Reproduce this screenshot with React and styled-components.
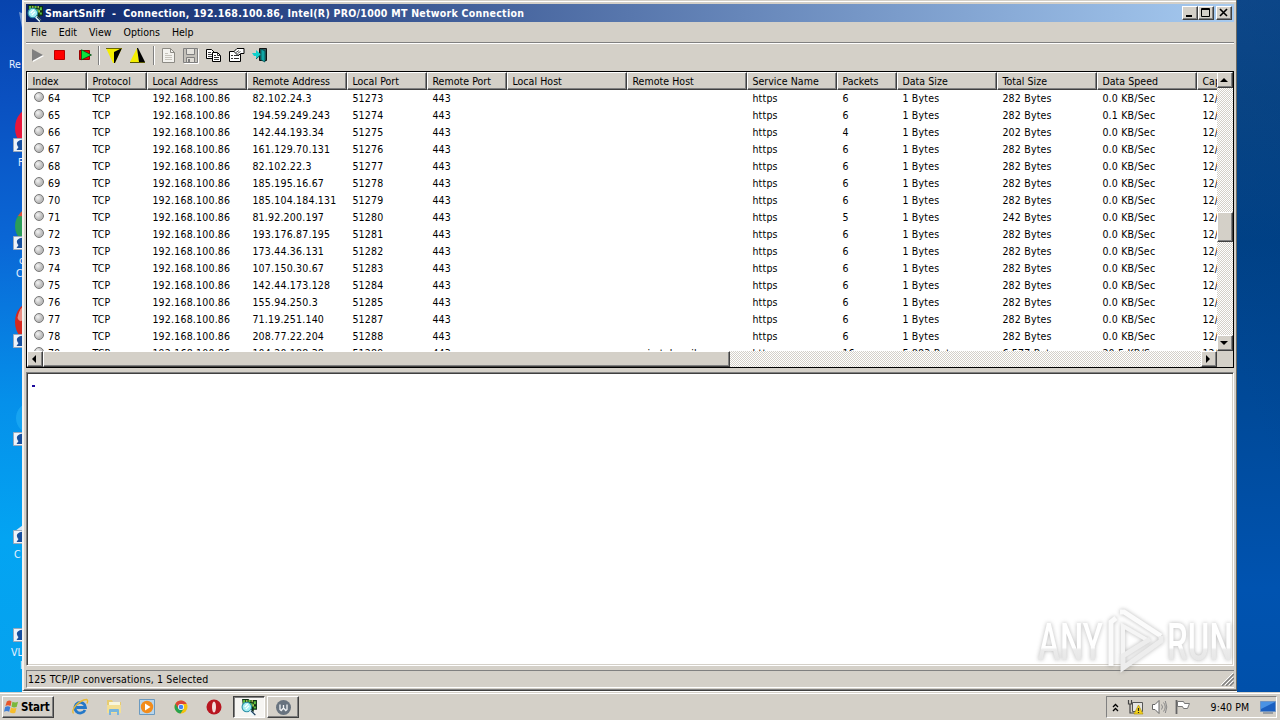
import React from 'react';
import styled, { createGlobalStyle, css } from 'styled-components';

const GlobalStyle = createGlobalStyle`
  * {
    box-sizing: border-box;
  }
  body {
    margin: 0;
    overflow: hidden;
    font-family: "DejaVu Sans Condensed", "DejaVu Sans", sans-serif;
    font-size: 10.5px;
    letter-spacing: 0.2px;
    line-height: 14px;
    color: #000;
  }
  svg {
    display: block;
    flex: none;
  }
`;

const raised = css`
  border: 1px solid;
  border-color: #fff #404040 #404040 #fff;
  box-shadow: inset -1px -1px 0 #808080;
  background-color: #d4d0c8;
`;

const Screen = styled.div`
  width: 1280px;
  height: 720px;
  display: flex;
  flex-direction: column;
  overflow: hidden;
  position: relative;
`;

const Workspace = styled.div`
  height: 692px;
  display: flex;
`;

const IconStrip = styled.div`
  width: 22px;
  display: grid;
  grid-template-rows: repeat(7, 98px);
  overflow: hidden;
  background: linear-gradient(#0744ae 0%, #0a50c0 14%, #0a67d6 35%, #0590ea 58%, #03a4f2 78%, #06a2ee 100%);
`;

const Shortcut = styled.div`
  padding-top: 10px;
  overflow: hidden;
`;

const ShortcutLabel = styled.div`
  margin-top: 4px;
  padding-left: ${props => props.$indent}px;
  color: #e6f1ff;
  line-height: 13px;
  white-space: pre;
  letter-spacing: 0;
`;

const RightStrip = styled.div`
  flex: 1;
  background: linear-gradient(250deg, rgba(0, 60, 130, 0.25), transparent 60%),
    linear-gradient(#10498a 0%, #0a4584 14%, #004186 35%, #004a9a 60%, #0053b0 85%, #0050aa 100%);
`;

const Window = styled.div`
  width: 1215px;
  height: 691px;
  display: flex;
  flex-direction: column;
  background-color: #d4d0c8;
  border-left: 2px solid #f4f2ee;
  border-right: 1px solid #6c6a62;
  border-bottom: 1px solid #404040;
  padding: 4px 2px 0;
  box-shadow: inset 0 1px 0 #d4d0c8, inset 0 2px 0 #fff, inset 0 -1px 0 #808080;
`;

const TitleBar = styled.div`
  height: 18px;
  display: flex;
  align-items: center;
  padding: 0 2px 0 1px;
  background: linear-gradient(90deg, #0a246a, #a6caf0);
`;

const Title = styled.div`
  flex: 1;
  padding-left: 1px;
  color: #fff;
  font-weight: bold;
  font-size: 10.5px;
  letter-spacing: 0.27px;
  white-space: pre;
`;

const CaptionButton = styled.div`
  ${raised}
  width: 16px;
  height: 14px;
  margin-left: ${props => (props.$gap ? 2 : 0)}px;
`;

const MenuBar = styled.div`
  height: 21px;
  display: flex;
  align-items: center;
  gap: 12px;
  padding: 0 0 1px 5px;
  letter-spacing: 0;
  border-bottom: 1px solid #808080;
`;

const ToolBar = styled.div`
  height: 28px;
  display: flex;
  align-items: center;
  border-top: 1px solid #fff;
  padding: 0 0 5px 3px;
`;

const Tool = styled.div`
  width: ${props => props.$w || 23}px;
  display: flex;
  justify-content: center;
`;

const Divider = styled.div`
  width: 2px;
  height: 19px;
  margin: 1px ${props => props.$right || 0}px 0 ${props => props.$left || 0}px;
  border-left: 1px solid #808080;
  border-right: 1px solid #fff;
`;

const ListFrame = styled.div`
  height: 297px;
  width: 1208px;
  display: grid;
  grid-template-columns: 1190px 16px;
  grid-template-rows: 279px 16px;
  border: 1px solid #000;
  background-color: #d4d0c8;
`;

const ListView = styled.div`
  background-color: #fff;
  overflow: hidden;
`;

const columns = '60px 60px 100px 100px 80px 80px 120px 120px 90px 60px 100px 100px 100px 100px';

const HeaderRow = styled.div`
  display: grid;
  width: 1270px;
  grid-template-columns: ${columns};
  height: 17px;
  letter-spacing: 0.05px;
`;

const HeaderCell = styled.div`
  background-color: #d4d0c8;
  border-top: 1px solid #fff;
  border-left: 1px solid #fff;
  border-right: 1px solid #404040;
  border-bottom: 1px solid #404040;
  box-shadow: inset -1px -1px 0 #808080;
  padding-left: 4.4px;
  line-height: 16px;
  white-space: nowrap;
`;

const Row = styled.div`
  display: grid;
  width: 1270px;
  grid-template-columns: ${columns};
  height: 17px;
`;

const Cell = styled.div`
  display: flex;
  align-items: center;
  padding-left: 5.4px;
  padding-top: 1px;
  white-space: nowrap;
`;

const Dot = styled.span`
  width: 10px;
  height: 10px;
  margin: -2px 4px 0 1.6px;
  border-radius: 50%;
  border: 1px solid #777;
  background: radial-gradient(circle at 35% 35%, #f2f2f2, #c0c0c0 55%, #b2b2b2);
`;

const track = css`
  display: flex;
  background: repeating-conic-gradient(#fff 0 25%, #d4d0c8 0 50%) 0 0 / 2px 2px;
`;

const VScroll = styled.div`
  ${track}
  flex-direction: column;
`;

const HScroll = styled.div`
  ${track}
`;

const ScrollButton = styled.div`
  ${raised}
  width: 16px;
  height: 16px;
  flex: none;
  display: flex;
  align-items: center;
  justify-content: center;
  padding-right: 2px;
`;

const Thumb = styled.div`
  ${raised}
  width: ${props => props.$w}px;
  height: ${props => props.$h}px;
  margin-top: ${props => props.$offset || 0}px;
`;

const Spacer = styled.div`
  flex: 1;
`;

const DataPane = styled.div`
  height: 294px;
  width: 1208px;
  margin-top: 4px;
  padding: 12px 0 0 5px;
  background-color: #fff;
  border: 1px solid;
  border-color: #808080 #fff #fff #808080;
  box-shadow: inset 1px 1px 0 #404040, inset -1px -1px 0 #d4d0c8;
`;

const Marker = styled.div`
  width: 3px;
  height: 2px;
  background-color: #1c0a9c;
`;

const StatusBar = styled.div`
  height: 18px;
  width: 1208px;
  margin-top: 4px;
  display: flex;
  align-items: center;
  justify-content: space-between;
  padding-left: 1px;
  letter-spacing: 0.15px;
  border-top: 1px solid #808080;
  border-left: 1px solid #808080;
  border-bottom: 1px solid #fff;
`;

const Taskbar = styled.div`
  height: 28px;
  display: flex;
  align-items: center;
  padding: 2px 3px 1px 2px;
  background-color: #d4d0c8;
  border-top: 1px solid #d4d0c8;
  box-shadow: inset 0 1px 0 #fff;
`;

const StartButton = styled.div`
  ${raised}
  width: 52px;
  height: 22px;
  display: flex;
  align-items: center;
  gap: 2px;
  padding-left: 1px;
  font-weight: bold;
  font-size: 11.5px;
  letter-spacing: -0.2px;
`;

const QuickLaunch = styled.div`
  display: flex;
  align-items: center;
  width: 179px;
  padding-left: 17px;
  gap: 15.5px;
`;

const TaskButton = styled.div`
  ${raised}
  width: 32px;
  height: 22px;
  margin-right: 2px;
  display: flex;
  align-items: center;
  justify-content: center;
  ${props =>
    props.$active &&
    css`
      border-color: #404040 #fff #fff #404040;
      box-shadow: inset 1px 1px 0 #808080;
      background-color: #f6f5f2;
    `}
`;

const Tray = styled.div`
  width: 171px;
  height: 22px;
  display: flex;
  align-items: center;
  padding-left: 5px;
  border: 1px solid;
  border-color: #808080 #fff #fff #808080;
`;

const Clock = styled.div`
  width: 42px;
  margin: 0 10px 0 11px;
  white-space: nowrap;
  letter-spacing: 0.1px;
`;

const Watermark = styled.svg`
  position: absolute;
  left: 1030px;
  top: 604px;
  filter: drop-shadow(0 0 2px rgba(80, 80, 80, 0.4));
`;

const headers = [
  'Index', 'Protocol', 'Local Address', 'Remote Address', 'Local Port', 'Remote Port', 'Local Host',
  'Remote Host', 'Service Name', 'Packets', 'Data Size', 'Total Size', 'Data Speed', 'Cap',
];

// index, remote address, local port, packets, total, speed
const connections = [
  [64, '82.102.24.3', 51273, 6, '282', '0.0'],
  [65, '194.59.249.243', 51274, 6, '282', '0.1'],
  [66, '142.44.193.34', 51275, 4, '202', '0.0'],
  [67, '161.129.70.131', 51276, 6, '282', '0.0'],
  [68, '82.102.22.3', 51277, 6, '282', '0.0'],
  [69, '185.195.16.67', 51278, 6, '282', '0.0'],
  [70, '185.104.184.131', 51279, 6, '282', '0.0'],
  [71, '81.92.200.197', 51280, 5, '242', '0.0'],
  [72, '193.176.87.195', 51281, 6, '282', '0.0'],
  [73, '173.44.36.131', 51282, 6, '282', '0.0'],
  [74, '107.150.30.67', 51283, 6, '282', '0.0'],
  [75, '142.44.173.128', 51284, 6, '282', '0.0'],
  [76, '155.94.250.3', 51285, 6, '282', '0.0'],
  [77, '71.19.251.140', 51287, 6, '282', '0.0'],
  [78, '208.77.22.204', 51288, 6, '282', '0.0'],
  [79, '104.20.188.38', 51289, 16, '6,577', '20.5', '5,883', 'myip.tabmail'],
];

const AppIcon = () => (
  <svg width="17" height="17" viewBox="0 0 16 16">
    <path d="M1 0h6l1 1h7v9h-3v2h-3V9H2z" fill="#0c2e14" />
    <path d="M2 1h2v3H2zM7 1h2v2H7zM12 2h2v3h-2zM9 4h2v3H9zM12 7h2v2h-2z" fill="#5fc23e" />
    <path d="M10 1h1v2h-1zM5 1h1v2H5zM11 5h1v2h-1z" fill="#e8f06a" />
    <circle cx="5.500" cy="7.500" r="4.500" fill="#a5eef2" stroke="#2a8fa6" />
    <path d="M3.500 7.500l3-3M4.500 9.500l3-3" stroke="#fff" strokeWidth="1.200" />
    <path d="M8.500 11l4 4" stroke="#e6fbff" strokeWidth="2.600" />
    <path d="M9.500 11l4 4.200" stroke="#1d3d5a" strokeWidth="1.200" />
  </svg>
);

const ShortcutIcon = ({ kind }) => (
  <svg width="22" height="44" viewBox="0 0 22 44">
    {kind === 'ball' && <ellipse cx="32" cy="20" rx="17" ry="20" fill="#e8163a" />}
    {kind === 'chrome' && (
      <g>
        <circle cx="34" cy="20" r="19" fill="#2b9d57" />
        <path d="M18 10a19 19 0 0 1 20-9v10z" fill="#dd4b39" />
      </g>
    )}
    {kind === 'opera' && (
      <g>
        <ellipse cx="32" cy="18" rx="17" ry="20" fill="#d4281e" />
        <path d="M17.500 14q1.500-8 5-11v13q-3 3-5-2z" fill="#eda79c" opacity=".8" />
      </g>
    )}
    {kind === 'paper' && <path d="M15 31l8-6v20H15z" fill="#d7e6f2" />}
    {kind === 'glow' && <circle cx="32" cy="16" r="16" fill="#27b5f8" opacity="0.5" />}
    {kind === 'bin' && <path d="M19 2l6 2v18l-3-4z" fill="#b9cbe6" opacity="0.6" />}
    {kind !== 'bin' && (
      <g>
        <path d="M13.500 30.500h16v13h-16z" fill="#edf3fa" stroke="#9aa9bb" />
        <path d="M23 31.500q-7 1-6 5 .5 2 1.500 2.500l-2 3h7z" fill="#164f9e" />
      </g>
    )}
  </svg>
);

// only the first letters stick out from under the window
const shortcuts = [
  { kind: 'bin', label: 'Re', indent: 9 },
  { kind: 'ball', label: 'F', indent: 18 },
  { kind: 'chrome', label: ' c\nC', indent: 16 },
  { kind: 'opera', label: '', indent: 19 },
  { kind: 'glow', label: '', indent: 19 },
  { kind: 'paper', label: 'C', indent: 14 },
  { kind: 'vlc', label: 'VL\n   l', indent: 11 },
];

const PlayIcon = () => (
  <svg width="14" height="14" viewBox="0 0 14 14">
    <path d="M2 2l11 6-11 6z" fill="#fff" />
    <path d="M1 1l11 6-11 6z" fill="#808080" />
  </svg>
);

const StopIcon = () => (
  <svg width="12" height="12" viewBox="0 0 12 12">
    <path d="M.5 1.500h10v9H.5z" fill="#f00" stroke="#b80000" />
  </svg>
);

const RestartIcon = () => (
  <svg width="14" height="12" viewBox="0 0 14 12">
    <path d="M.5 1.500h10v9H.5z" fill="#e00" stroke="#900" />
    <path d="M2.500 .8l10 5.200-10 4.800z" fill="#0be33c" stroke="#064a14" strokeWidth=".8" />
  </svg>
);

const FilterIcon = ({ up }) => (
  <svg width="17" height="17" viewBox="0 0 17 17">
    {up ? (
      <g>
        <path d="M8 1L1 15h9z" fill="#f4ee00" />
        <path d="M8 1l2 14h6L9 1z" fill="#000" />
        <path d="M1 15.500h15" stroke="#5a5800" />
      </g>
    ) : (
      <g>
        <path d="M0 1h16L9 16H7z" fill="#f4ee00" />
        <path d="M16 1L9 16H8V5z" fill="#000" />
        <path d="M0 1.500h16" stroke="#6a6700" />
      </g>
    )}
  </svg>
);

const NewIcon = () => (
  <svg width="15" height="17" viewBox="0 0 15 17">
    <path d="M1.500 1.500h8l4 4v10h-12z" fill="#f3f2ee" stroke="#8c8a84" />
    <path d="M9.500 1.500v4h4" fill="none" stroke="#8c8a84" />
    <path d="M4 6.500h3M4 8.500h7M4 10.500h7M4 12.500h7" stroke="#c6c3bb" />
  </svg>
);

const SaveIcon = () => (
  <svg width="17" height="17" viewBox="0 0 17 17">
    <path d="M2.500 2.500h14v14h-14z" fill="none" stroke="#fff" />
    <path d="M1.500 1.500h14v14h-14z" fill="#c4c1ba" stroke="#808080" />
    <path d="M4.500 1.500h8v6h-8z" fill="#e6e4de" stroke="#808080" />
    <path d="M4.500 10.500h8v5h-8z" fill="#e0ddd6" stroke="#808080" />
    <path d="M6 12h2v3H6z" fill="#808080" />
  </svg>
);

const CopyIcon = () => (
  <svg width="16" height="15" viewBox="0 0 16 15">
    <path d="M.5 1.500h5l3 3v6h-8z" fill="#fff" stroke="#000" />
    <path d="M2 4.500h3M2 6.500h4M2 8.500h4" stroke="#444" />
    <path d="M6.500 4.500h5l3 3v6h-8z" fill="#fff" stroke="#000" />
    <path d="M11.500 4.500v3h3M8 7.500h2M8 9.500h5M8 11.500h5" fill="none" stroke="#333" />
  </svg>
);

const PropertiesIcon = () => (
  <svg width="16" height="16" viewBox="0 0 16 16">
    <path d="M.5 4.500h11v10H.5z" fill="#fff" stroke="#000" />
    <path d="M2 8.500h2M5 8.500h5M2 11.500h2M5 11.500h5" stroke="#333" />
    <path d="M5 4.500L8 1.500h7v5h-3L9 8.500 7.500 7z" fill="#fff" stroke="#000" />
    <path d="M7 5.500l3-2M8.500 6.500l3-2" stroke="#555" />
  </svg>
);

const ExitIcon = () => (
  <svg width="16" height="16" viewBox="0 0 16 16">
    <path d="M7.500 1.500h7v12h-7z" fill="#2d5a5e" stroke="#111" />
    <path d="M9 2l4 2v11l-4-2z" fill="#12a5a5" stroke="#044" strokeWidth=".7" />
    <path d="M0 6h4V3l5 4.500L4 12V9H2z" fill="#12d0cc" />
    <path d="M4 12l5-4.500" stroke="#066" />
  </svg>
);

const Arrow = ({ dir }) => {
  const paths = {
    up: 'M4 2l4 4H0z',
    down: 'M0 2h8L4 6z',
    left: 'M6 0v8L2 4z',
    right: 'M2 0v8l4-4z',
  };
  return (
    <svg width="8" height="8" viewBox="0 0 8 8">
      <path d={paths[dir]} />
    </svg>
  );
};

const WindowsFlag = () => (
  <svg width="15" height="16" viewBox="0 0 16 16">
    <path d="M3 2q3-2 5 0L7 7Q4 5.500 1.500 7z" fill="#e8562a" />
    <path d="M9 2.500q3 1.500 6 0L13.500 8Q10 9 8 7.500z" fill="#7ab83c" />
    <path d="M1.200 8q3-1.500 5.500 0L5.500 13Q3 11.500 0 13z" fill="#3f7fd6" />
    <path d="M7.500 8.500q3 1.500 5.800.5L12 14q-3 1.500-5.800-.5z" fill="#f6bd2c" />
  </svg>
);

const IeIcon = () => (
  <svg width="18" height="18" viewBox="0 0 18 18">
    <path d="M14 12A5.300 5.300 0 1 1 14.500 9.500H5.500" fill="none" stroke="#2478c8" strokeWidth="2.800" />
    <path d="M2.500 15.500C-1 12.500 8 2 15.500 1.500q2 .5.500 4" fill="none" stroke="#e8b931" strokeWidth="1.400" />
  </svg>
);

const FolderIcon = () => (
  <svg width="18" height="18" viewBox="0 0 18 18">
    <path d="M2 2h5l1 2h8v11H2z" fill="#e7cc72" />
    <path d="M4 4h11v5H4z" fill="#f8f6dc" />
    <path d="M2 7h14v8H2z" fill="#f3df94" />
    <path d="M4 17v-5q0-1 1-1h8q1 0 1 1v5h-2v-3H6v3z" fill="#77b5dd" />
  </svg>
);

const MediaIcon = () => (
  <svg width="18" height="18" viewBox="0 0 18 18">
    <path d="M1.500 1.500h15v15h-15z" fill="#b8d5ec" stroke="#6b9ac0" />
    <circle cx="9" cy="9" r="6.200" fill="#f28c1c" />
    <path d="M7 5.500l5.500 3.500L7 12.500z" fill="#fff" />
  </svg>
);

const ChromeIcon = () => (
  <svg width="18" height="18" viewBox="0 0 18 18">
    <circle cx="9" cy="9" r="6.500" fill="#f4c20d" />
    <path d="M3.400 5.800A6.500 6.500 0 0 1 14.700 6H9L6 11z" fill="#db4437" />
    <path d="M3.400 5.800A6.500 6.500 0 0 0 8.500 15.500L11.500 11 6 10z" fill="#26a150" />
    <circle cx="9" cy="9" r="3" fill="#fff" />
    <circle cx="9" cy="9" r="2.300" fill="#4285f4" />
  </svg>
);

const OperaIcon = () => (
  <svg width="18" height="18" viewBox="0 0 18 18">
    <circle cx="9" cy="9" r="7.500" fill="#b81520" />
    <ellipse cx="9" cy="9" rx="2" ry="5.500" fill="#f3dcdc" />
  </svg>
);

const WIcon = () => (
  <svg width="17" height="17" viewBox="0 0 17 17">
    <circle cx="8.500" cy="8.500" r="7.500" fill="#68737f" />
    <path d="M5 5.500v5l1.200 1L8.500 9l2.300 2.500 1.200-1v-5M8.500 6v3" fill="none" stroke="#f2f4f6" strokeWidth="1.300" />
  </svg>
);

const Chevrons = () => (
  <svg width="7" height="9" viewBox="0 0 7 9">
    <path d="M1 4l2.500-2.500L6 4M1 8l2.500-2.500L6 8" fill="none" stroke="#000" strokeWidth="1.300" />
  </svg>
);

const NetworkIcon = () => (
  <svg width="17" height="16" viewBox="0 0 17 16">
    <path d="M5.500 3.500h10v9h-10z" fill="#e5e5e2" stroke="#555" />
    <path d="M1.500 1v4h3V1M3 5v9h4" fill="none" stroke="#444" strokeWidth="1.200" />
    <path d="M11.500 6l4.500 9H7z" fill="#f3d21b" stroke="#a98a00" strokeWidth=".6" />
    <path d="M11.500 9v3M11.500 13v1" stroke="#222" strokeWidth="1.200" />
  </svg>
);

const VolumeIcon = () => (
  <svg width="17" height="16" viewBox="0 0 17 16">
    <path d="M1.500 5.500H4l4-4v13l-4-4H1.500z" fill="#fff" stroke="#666" />
    <path d="M10.500 5.500q2 2.500 0 5M12.500 3.500q3.500 4.500 0 9M14.300 2q3 6 0 12" fill="none" stroke="#888" />
  </svg>
);

const FlagIcon = () => (
  <svg width="17" height="16" viewBox="0 0 17 16">
    <path d="M2.500 1v14" stroke="#666" strokeWidth="1.800" />
    <path d="M3.500 2.500h6l1 2h5l-2 5h-4l-1-2h-5z" fill="#fff" stroke="#777" />
  </svg>
);

const DesktopIcon = () => (
  <svg width="16" height="14" viewBox="0 0 16 14">
    <path d="M.5 1.500h15v10H.5z" fill="#1b5fc0" stroke="#6f94c4" />
    <path d="M1 2h14L1 9z" fill="#4a92e4" />
    <path d="M3 13h10" stroke="#5d6c80" />
  </svg>
);

const Grip = () => (
  <svg width="13" height="13" viewBox="0 0 13 13">
    <path d="M1 13L13 1M5 13l8-8M9 13l4-4" stroke="#808080" strokeWidth="1.500" />
    <path d="M0 12L12 0M4 12l8-8M8 12l4-4" stroke="#fff" />
  </svg>
);

const Logo = () => (
  <Watermark width="204" height="74" viewBox="0 0 204 74">
    <defs>
      <linearGradient id="mark" x1="0" y1="0" x2="0" y2="1">
        <stop offset="0.58" stopColor="#fff" />
        <stop offset="0.62" stopColor="#ebebeb" />
        <stop offset="1" stopColor="#e0e0e0" />
      </linearGradient>
    </defs>
    <g fill="url(#mark)" fontFamily="Roboto, sans-serif" fontWeight="500" fontSize="52">
      <text x="8" y="56" textLength="65" lengthAdjust="spacingAndGlyphs">ANY</text>
      <text x="137" y="56" textLength="66" lengthAdjust="spacingAndGlyphs">RUN</text>
    </g>
    <path d="M93 50V22l26 15" fill="none" stroke="#f5f5f5" strokeWidth="4" />
    <path d="M81 62V18l5-4M90 8l4 0 37 24" fill="none" stroke="#fbfbfb" strokeWidth="5" />
    <path d="M131 32v5L93 64v-12l27-17" fill="none" stroke="#ededed" strokeWidth="5" />
  </Watermark>
);

const App = () => {
  return (
    <Screen>
      <GlobalStyle />
      <Workspace>
        <IconStrip>
          {shortcuts.map(item => (
            <Shortcut key={item.kind}>
              <ShortcutIcon kind={item.kind} />
              {item.label && <ShortcutLabel $indent={item.indent}>{item.label}</ShortcutLabel>}
            </Shortcut>
          ))}
        </IconStrip>
        <Window>
          <TitleBar>
            <AppIcon />
            <Title>SmartSniff  -  Connection, 192.168.100.86, Intel(R) PRO/1000 MT Network Connection</Title>
            <CaptionButton>
              <svg width="14" height="12"><path d="M3 8h6v2H3z" /></svg>
            </CaptionButton>
            <CaptionButton>
              <svg width="14" height="12"><path d="M2.500 1.500h8v8h-8zM2 2.500h9" fill="none" stroke="#000" /></svg>
            </CaptionButton>
            <CaptionButton $gap>
              <svg width="14" height="12"><path d="M3 2l7 7M10 2L3 9" stroke="#000" strokeWidth="1.600" /></svg>
            </CaptionButton>
          </TitleBar>
          <MenuBar>
            <span>File</span>
            <span>Edit</span>
            <span>View</span>
            <span>Options</span>
            <span>Help</span>
          </MenuBar>
          <ToolBar>
            <Tool $w={18}><PlayIcon /></Tool>
            <Tool $w={26}><StopIcon /></Tool>
            <Tool $w={25}><RestartIcon /></Tool>
            <Divider />
            <Tool $w={28}><FilterIcon /></Tool>
            <Tool $w={18}><FilterIcon up /></Tool>
            <Divider $left={7} $right={3} />
            <Tool $w={21}><NewIcon /></Tool>
            <Tool><SaveIcon /></Tool>
            <Tool><CopyIcon /></Tool>
            <Tool><PropertiesIcon /></Tool>
            <Tool><ExitIcon /></Tool>
          </ToolBar>
          <ListFrame>
            <ListView>
              <HeaderRow>
                {headers.map(name => <HeaderCell key={name}>{name}</HeaderCell>)}
              </HeaderRow>
              {connections.map(([index, remote, port, packets, total, speed, size = '1', host = '']) => (
                <Row key={index}>
                  <Cell><Dot />{index}</Cell>
                  <Cell>TCP</Cell>
                  <Cell>192.168.100.86</Cell>
                  <Cell>{remote}</Cell>
                  <Cell>{port}</Cell>
                  <Cell>443</Cell>
                  <Cell />
                  <Cell>{host}</Cell>
                  <Cell>https</Cell>
                  <Cell>{packets}</Cell>
                  <Cell>{size} Bytes</Cell>
                  <Cell>{total} Bytes</Cell>
                  <Cell>{speed} KB/Sec</Cell>
                  <Cell>12/</Cell>
                </Row>
              ))}
            </ListView>
            <VScroll>
              <ScrollButton><Arrow dir="up" /></ScrollButton>
              <Thumb $w={16} $h={30} $offset={124} />
              <Spacer />
              <ScrollButton><Arrow dir="down" /></ScrollButton>
            </VScroll>
            <HScroll>
              <ScrollButton><Arrow dir="left" /></ScrollButton>
              <Thumb $w={687} $h={16} />
              <Spacer />
              <ScrollButton><Arrow dir="right" /></ScrollButton>
            </HScroll>
          </ListFrame>
          <DataPane>
            <Marker />
          </DataPane>
          <StatusBar>
            <span>125 TCP/IP conversations, 1 Selected</span>
            <Grip />
          </StatusBar>
        </Window>
        <RightStrip />
      </Workspace>
      <Taskbar>
        <StartButton><WindowsFlag />Start</StartButton>
        <QuickLaunch>
          <IeIcon />
          <FolderIcon />
          <MediaIcon />
          <ChromeIcon />
          <OperaIcon />
        </QuickLaunch>
        <TaskButton $active><AppIcon /></TaskButton>
        <TaskButton><WIcon /></TaskButton>
        <Spacer />
        <Tray>
          <Tool $w={6}><Chevrons /></Tool>
          <Tool $w={38}><NetworkIcon /></Tool>
          <Tool $w={12}><VolumeIcon /></Tool>
          <Tool $w={36}><FlagIcon /></Tool>
          <Clock>9:40 PM</Clock>
          <DesktopIcon />
        </Tray>
      </Taskbar>
      <Logo />
    </Screen>
  );
};

export default App;
